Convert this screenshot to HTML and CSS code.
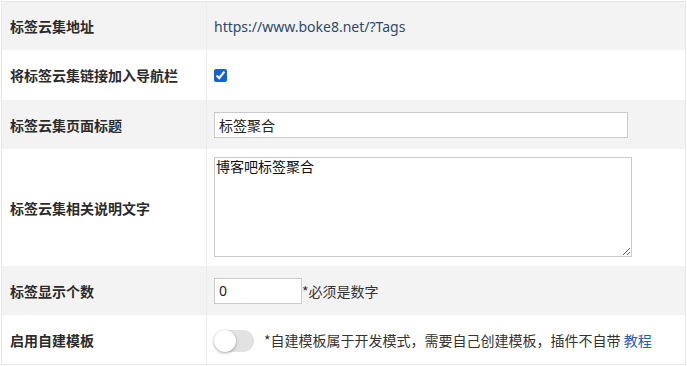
FILE: index.html
```html
<!DOCTYPE html>
<html lang="zh-CN">
<head>
<meta charset="utf-8">
<title>标签云集设置</title>
<link rel="stylesheet" href="styles.css">
</head>
<body>
<table class="form-table">
  <tr class="row gray h48">
    <th>标签云集地址</th>
    <td><span class="url">https://www.boke8.net/?Tags</span></td>
  </tr>
  <tr class="row h50">
    <th>将标签云集链接加入导航栏</th>
    <td><input class="check" type="checkbox" checked></td>
  </tr>
  <tr class="row gray h49">
    <th>标签云集页面标题</th>
    <td><input class="text-input" type="text" value="标签聚合"></td>
  </tr>
  <tr class="row h117">
    <th>标签云集相关说明文字</th>
    <td><textarea class="area">博客吧标签聚合</textarea></td>
  </tr>
  <tr class="row gray h49">
    <th>标签显示个数</th>
    <td><div class="inline"><input class="num-input" type="text" value="0"><span class="note">*必须是数字</span></div></td>
  </tr>
  <tr class="row h49">
    <th>启用自建模板</th>
    <td><div class="inline"><span class="toggle"><span class="knob"></span></span><span class="note toggle-note">*自建模板属于开发模式，需要自己创建模板，插件不自带 <a class="link" href="#">教程</a></span></div></td>
  </tr>
</table>
</body>
</html>
```
FILE: styles.css
```css
* { box-sizing: border-box; }
html, body { background: #fff; }
body {
  margin: 1px;
  font-family: "Noto Sans", "Noto Sans CJK SC", sans-serif;
  font-size: 14px;
  color: #333;
}
.form-table {
  width: 685px;
  border: 1px solid #e6e6e6;
  border-collapse: separate;
  border-spacing: 0;
}
.form-table th,
.form-table td {
  padding: 0;
  vertical-align: middle;
}
.form-table th {
  width: 204px;
  text-align: left;
  padding-left: 8px;
  font-weight: bold;
  color: #2b2b2b;
  font-family: "Noto Sans CJK SC", sans-serif;
  font-size: 14px;
}
.form-table td {
  border-left: 1px solid #ececec;
  padding-left: 7px;
}
.gray th, .gray td { background: #f3f3f3; }
.h48 { height: 48px; }
.h49 { height: 49px; }
.h50 { height: 50px; }
.h117 { height: 117px; }
.url {
  color: #2c4a6d;
  font-family: "Noto Sans", sans-serif;
  font-size: 14px;
}
.check {
  display: block;
  width: 13px;
  height: 13px;
  margin: 1px 0 0 0;
  accent-color: #1462d5;
}
.text-input {
  display: block;
  width: 414px;
  height: 26px;
  border: 1px solid #cbcbcb;
  padding: 0 4px;
  font-family: "Noto Sans CJK SC", sans-serif;
  font-size: 14px;
  color: #222;
  background: #fff;
  outline: none;
}
.area {
  display: block;
  width: 418px;
  height: 100px;
  margin-top: -1px;
  border: 1px solid #cbcbcb;
  padding: 0 1px;
  font-family: "Noto Sans CJK SC", sans-serif;
  font-size: 14px;
  line-height: 17px;
  color: #111;
  resize: vertical;
  background: #fff;
}
.inline {
  display: flex;
  align-items: center;
}
.num-input {
  width: 88px;
  height: 26px;
  border: 1px solid #cbcbcb;
  padding: 0 4px;
  font-family: "Noto Sans", sans-serif;
  font-size: 14px;
  color: #222;
  background: #fff;
  outline: none;
}
.note {
  font-family: "Noto Sans CJK SC", sans-serif;
  font-size: 14px;
  color: #333;
}
.toggle {
  position: relative;
  display: block;
  width: 40px;
  height: 22px;
  border-radius: 11px;
  background: #e2e2e2;
  margin-top: 2px;
}
.knob {
  position: absolute;
  left: 0;
  top: 0;
  width: 22px;
  height: 22px;
  border-radius: 50%;
  background: #fff;
  box-shadow: 0 1px 3px rgba(0, 0, 0, 0.35);
}
.toggle-note { margin-left: 10px; }
.link {
  color: #2560a6;
  text-decoration: none;
}
```
